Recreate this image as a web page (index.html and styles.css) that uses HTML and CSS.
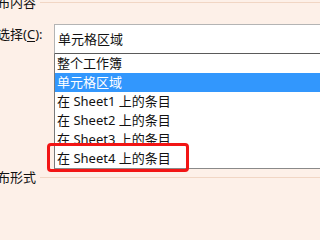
FILE: index.html
```html
<!DOCTYPE html>
<html lang="zh-CN">
<head>
<meta charset="utf-8">
<link rel="stylesheet" href="styles.css">
</head>
<body>
<div class="page">
  <div class="section-head top"><span class="head-text">布内容</span><span class="rule"></span></div>
  <div class="field">
    <div class="label">选择(<u>C</u>):</div>
    <div class="combo-wrap">
      <div class="combo">单元格区域</div>
      <ul class="list">
        <li>整个工作簿</li>
        <li class="sel">单元格区域</li>
        <li>在 Sheet1 上的条目</li>
        <li>在 Sheet2 上的条目</li>
        <li>在 Sheet3 上的条目</li>
        <li>在 Sheet4 上的条目</li>
      </ul>
    </div>
  </div>
  <div class="section-head bottom"><span class="head-text">布形式</span><span class="rule"></span></div>
  <div class="highlight"></div>
</div>
</body>
</html>
```
FILE: styles.css
```css
html, body {
  margin: 0;
  padding: 0;
}
body {
  background: #fdf0e8;
  font-family: "Noto Sans", "Noto Sans CJK SC", sans-serif;
  font-size: 13px;
  color: #111111;
}
.page {
  position: relative;
  width: 320px;
  height: 200px;
  overflow: hidden;
}
.section-head {
  display: flex;
  align-items: center;
  gap: 4px;
  height: 14px;
  margin-left: -3px;
}
.section-head.top {
  margin-top: -5px;
}
.head-text {
  line-height: 14px;
  white-space: nowrap;
}
.rule {
  flex: 1;
  height: 1px;
  background: #f1d6c4;
}
.field {
  display: flex;
  margin-top: 15px;
}
.label {
  flex: none;
  width: 57px;
  margin-left: -3px;
  padding-top: 0;
  line-height: 20px;
  white-space: nowrap;
}
.label u {
  text-decoration-thickness: 1px;
  text-underline-offset: 2px;
}
.combo-wrap {
  flex: 1;
  display: flex;
  flex-direction: column;
}
.combo {
  height: 28px;
  background: #ffffff;
  border-top: 1px solid #b4b4b4;
  border-bottom: 1px solid #5a5a5a;
  border-left: 1px solid #b4b4b4;
  padding-left: 3px;
  line-height: 28px;
}
.list {
  list-style: none;
  margin: 0;
  padding: 0;
  background: #ffffff;
  border-left: 1px solid #7a7a7a;
  border-bottom: 1px solid #8a8a8a;
  width: 300px;
}
.list li {
  height: 19px;
  line-height: 19px;
  padding-left: 2px;
  white-space: nowrap;
}
.list li.sel {
  background: #3297fd;
  color: #ffffff;
}
.section-head.bottom {
  margin-top: 1px;
}
.highlight {
  position: absolute;
  left: 47px;
  top: 143px;
  width: 136px;
  height: 23px;
  border: 3px solid #f21515;
  border-radius: 4px;
}
```
